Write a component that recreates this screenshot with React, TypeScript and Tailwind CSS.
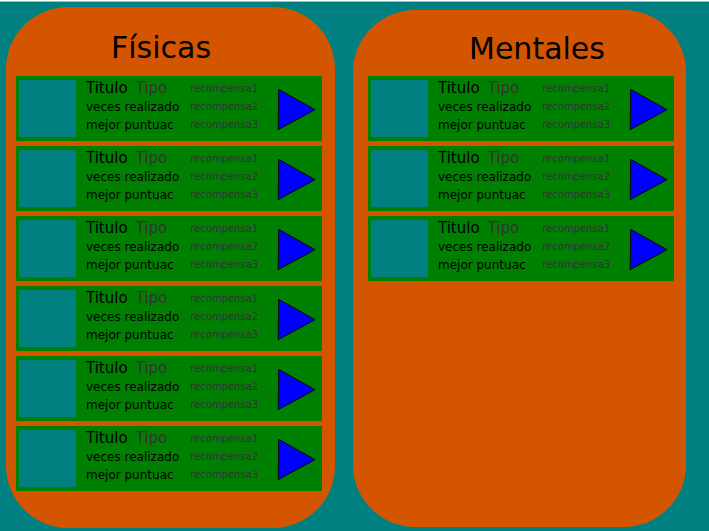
type Activity = {
  id: number;
  title: string;
  kind: string;
  played: string;
  best: string;
  rewards: string[];
};

function makeActivities(count: number): Activity[] {
  return Array.from({ length: count }, (_, id) => ({
    id,
    title: "Titulo",
    kind: "Tipo",
    played: "veces realizado",
    best: "mejor puntuac",
    rewards: ["recompensa1", "recompensa2", "recompensa3"],
  }));
}

const physical = makeActivities(6);
const mental = makeActivities(3);

function ActivityRow({ activity }: { activity: Activity }) {
  return (
    <li className="flex h-[65px] items-start bg-[#008000] pt-1 pr-[5px] pl-[3px]">
      <div className="size-[57px] shrink-0 bg-[#008080]" />
      <div className="ml-[10px] shrink-0 whitespace-nowrap text-black">
        <div className="mb-0.5 flex gap-2 text-[15px] leading-4">
          <h2>{activity.title}</h2>
          <span className="text-[#333333]">{activity.kind}</span>
        </div>
        <p className="text-[12px] leading-[18px]">{activity.played}</p>
        <p className="text-[12px] leading-[18px]">{activity.best}</p>
      </div>
      <ul className="ml-[11px] text-[10px] leading-[18px] text-[#333333]">
        {activity.rewards.map((reward) => (
          <li key={reward}>{reward}</li>
        ))}
      </ul>
      <button type="button" aria-label="Jugar" className="ml-auto shrink-0 cursor-pointer self-center">
        <svg width="40" height="47" viewBox="0 0 40 47" className="block" aria-hidden="true">
          <path d="M1.7 2.4 L38 22.7 L1.2 42.6 Z" fill="#0000ff" stroke="#000000" strokeWidth="1" />
        </svg>
      </button>
    </li>
  );
}

function ActivityList({ activities }: { activities: Activity[] }) {
  return (
    <ul className="flex flex-col gap-[5px]">
      {activities.map((activity) => (
        <ActivityRow key={activity.id} activity={activity} />
      ))}
    </ul>
  );
}

export default function App() {
  return (
    <main className="grid min-h-screen grid-cols-[329fr_333fr] gap-[18px] border-t border-white bg-[#008080] pt-[6px] pr-[23px] pb-[3px] pl-[6px] font-['DejaVu_Sans',sans-serif] shadow-[inset_0_1px_#8cc6c6]">
      <section className="rounded-[62px] bg-[#d45500] pt-[23px] pr-[13px] pb-[37px] pl-[10px]">
        <h1 className="mb-[10px] pr-4 text-center text-[30px] leading-9 text-black">Físicas</h1>
        <ActivityList activities={physical} />
      </section>
      <section className="mt-[3px] mb-px rounded-[62px] bg-[#d45500] pt-[21px] pr-[12px] pl-[15px]">
        <h1 className="mb-[9px] pl-8 text-center text-[30px] leading-9 text-black">Mentales</h1>
        <ActivityList activities={mental} />
      </section>
    </main>
  );
}
